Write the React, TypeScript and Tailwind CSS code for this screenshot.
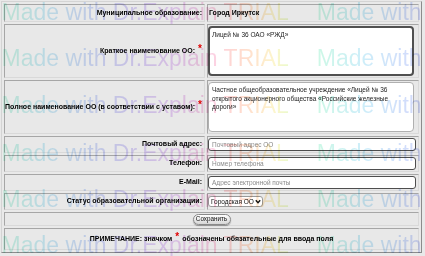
import React from "react";

const Star = () => (
  <span className="text-[#e00000] font-bold text-[10px] leading-none relative -top-[2px] ml-[3px]">*</span>
);

const labelCls =
  "bg-[#e8e8e8] border border-t-[#a6a6a6] border-l-[#a6a6a6] border-b-[#d9d9d9] border-r-[#d9d9d9] flex items-center justify-end pr-[2px] text-[7px] font-bold text-black whitespace-nowrap";
const valueCls =
  "bg-[#e8e8e8] border border-t-[#a6a6a6] border-l-[#a6a6a6] border-b-[#d9d9d9] border-r-[#d9d9d9] flex items-center";

const wmLines = [1, 47, 94, 142, 188, 234];

export default function App() {
  return (
    <div className="relative w-[425px] h-[256px] overflow-hidden bg-[#e9e9e9] font-['Liberation_Sans',Arial,sans-serif]">
      <div className="ml-[1px] mt-[1px] w-[421px] border border-t-[#d4d4d4] border-l-[#d4d4d4] border-r-[#8c8c8c] border-b-[#8c8c8c] p-[2px] grid grid-cols-[201px_212px] gap-[2px]">
        {/* Row 1 */}
        <div className={`${labelCls} h-[18px]`}>Муниципальное образование:</div>
        <div className={`${valueCls} h-[18px] pl-[1px] text-[7px] font-bold text-black`}>Город Иркутск</div>

        {/* Row 2 */}
        <div className={`${labelCls} h-[54px]`}>
          Краткое наименование ОО:<Star />
        </div>
        <div className={`${valueCls} h-[54px]`}>
          <div className="w-[206px] h-[50px] bg-white border-2 border-[#505050] rounded-[4px] px-[2px] pt-[3px] text-[6.5px] leading-[8.5px] text-[#222]">
            Лицей № 36 ОАО «РЖД»
          </div>
        </div>

        {/* Row 3 */}
        <div className={`${labelCls} h-[54px]`}>
          Полное наименование ОО (в соответствии с уставом):<Star />
        </div>
        <div className={`${valueCls} h-[54px]`}>
          <div className="w-[206px] h-[50px] bg-white border border-[#b0b0b0] rounded-[4px] px-[3px] pt-[3px] text-[6.5px] leading-[8.5px] text-[#222] whitespace-nowrap">
            Частное общеобразовательное учреждение «Лицей № 36
            <br />
            открытого акционерного общества «Российские железные
            <br />
            дороги»
          </div>
        </div>

        {/* Row 4 */}
        <div className={`${labelCls} h-[17px]`}>Почтовый адрес:</div>
        <div className={`${valueCls} h-[17px]`}>
          <input
            readOnly
            placeholder="Почтовый адрес ОО"
            className="w-[208px] h-[13px] bg-white border border-[#4e4e4e] rounded-[3px] pl-[3px] text-[6.5px] text-[#222] placeholder:text-[#8a8a8a] outline-none"
          />
        </div>

        {/* Row 5 */}
        <div className={`${labelCls} h-[17px]`}>Телефон:</div>
        <div className={`${valueCls} h-[17px]`}>
          <input
            readOnly
            placeholder="Номер телефона"
            className="w-[208px] h-[13px] bg-white border border-[#4e4e4e] rounded-[3px] pl-[3px] text-[6.5px] text-[#222] placeholder:text-[#8a8a8a] outline-none"
          />
        </div>

        {/* Row 6 */}
        <div className={`${labelCls} h-[17px]`}>E-Mail:</div>
        <div className={`${valueCls} h-[17px]`}>
          <input
            readOnly
            placeholder="Адрес электронной почты"
            className="w-[208px] h-[13px] bg-white border border-[#4e4e4e] rounded-[3px] pl-[3px] text-[6.5px] text-[#222] placeholder:text-[#8a8a8a] outline-none"
          />
        </div>

        {/* Row 7 */}
        <div className={`${labelCls} h-[17px]`}>Статус образовательной организации:</div>
        <div className={`${valueCls} h-[17px]`}>
          <div className="w-[55px] h-[11px] bg-white border border-[#9a9a9a] rounded-[3px] pl-[2px] pr-[1px] flex items-center justify-between text-[6.5px] text-[#111]">
            <span>Городская ОО</span>
            <svg width="6" height="5" viewBox="0 0 6 5">
              <path d="M0.8 1.2 L3 3.6 L5.2 1.2" fill="none" stroke="#111" strokeWidth="1.4" />
            </svg>
          </div>
        </div>

        {/* Row 8 */}
        <div className={`${valueCls} col-span-2 h-[14px] justify-center`}>
          <button className="w-[38px] h-[11px] rounded-full border border-[#8a8a8a] bg-[linear-gradient(#ffffff,#d6d6d6)] shadow-[0_1px_1px_rgba(0,0,0,0.35)] text-[6.3px] leading-none text-[#111] flex items-center justify-center">
            Сохранить
          </button>
        </div>

        {/* Row 9 */}
        <div className={`${valueCls} col-span-2 h-[22px] justify-center text-[7px] font-bold text-black whitespace-nowrap`}>
          ПРИМЕЧАНИЕ: значком
          <span className="text-[#e00000] font-bold text-[10px] leading-none relative -top-[2px] mx-[3px]">*</span>
          обозначены обязательные для ввода поля
        </div>
      </div>

      {/* Watermark overlay */}
      <div className="absolute inset-0 pointer-events-none">
        {wmLines.map((t) => (
          <div
            key={t}
            style={{ top: t }}
            className="absolute left-0 w-[425px] flex gap-[28px] pl-[1.6px] whitespace-nowrap text-[23px] leading-none font-['Liberation_Sans',Arial,sans-serif] bg-[image:repeating-linear-gradient(90deg,#cdf8e6_0px,#cdeef9_45px,#d2ddfb_90px,#dcd3fb_135px,#ecd0f9_175px,#fbd0e6_210px,#ffd8d0_235px,#ffe4cc_255px,#fcf6cc_275px,#e2fbcc_295px,#cdf8e6_317px)] bg-clip-text text-transparent mix-blend-multiply"
          >
            <span>Made with Dr.Explain TRIAL</span>
            <span>Made with Dr.Explain TRIAL</span>
          </div>
        ))}
      </div>
    </div>
  );
}
